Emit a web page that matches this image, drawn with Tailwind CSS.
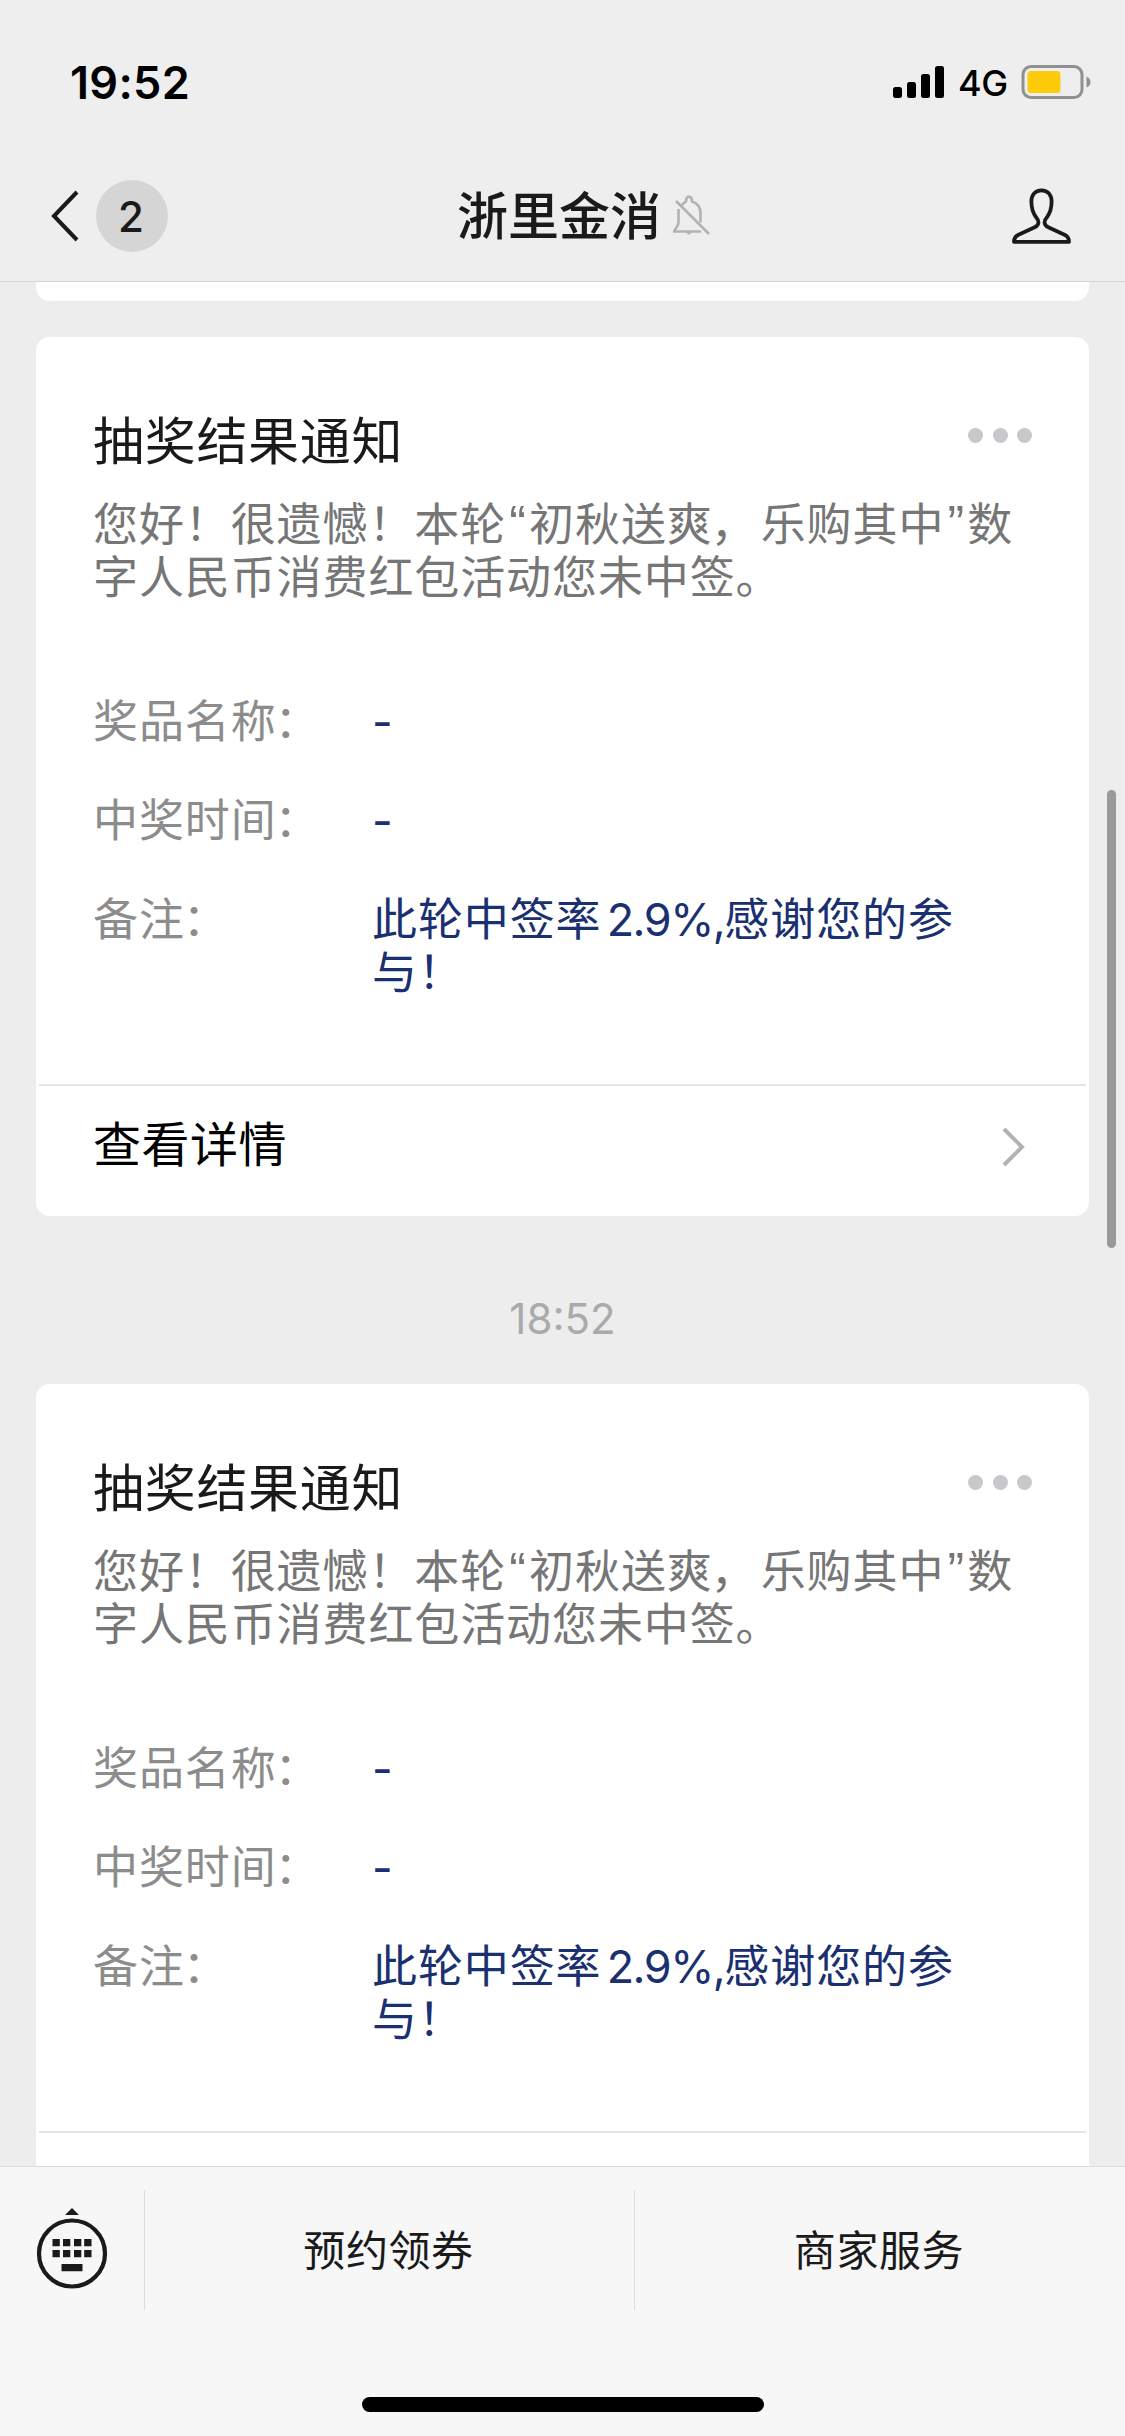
<!DOCTYPE html>
<html lang="zh-CN">
<head>
<meta charset="utf-8">
<title>浙里金消</title>
<script src="https://cdn.jsdelivr.net/npm/@tailwindcss/browser@4"></script>
</head>
<body class="relative flex h-[2436px] w-[1125px] flex-col overflow-hidden bg-[#ededed] font-['Inter','Noto_Sans_CJK_SC',sans-serif] text-[#1a1a1a]">

<header class="flex h-[282px] shrink-0 flex-col border-b border-[#d5d5d5] bg-[#eeeeef]">
  <div class="flex h-[164px] items-center justify-between pl-[70px] pr-[34px]">
    <span class="text-[45px] leading-[45px] font-semibold tracking-[0.3px] text-black">19:52</span>
    <div class="flex items-center">
      <svg class="h-8 w-[51px]" viewBox="0 0 51 32"><rect x="0" y="21" width="9" height="11" rx="2.5"/><rect x="14" y="16" width="9" height="16" rx="2.5"/><rect x="28" y="8" width="9" height="24" rx="2.5"/><rect x="42" y="0" width="9" height="32" rx="2.5"/></svg>
      <span class="ml-[14px] w-[63px] pt-[2px] text-[36px] leading-9 font-medium tracking-[-0.5px] text-black">4G</span>
      <svg class="h-[34px] w-[70px]" viewBox="0 0 70 34"><rect x="2" y="1.500" width="59" height="31" rx="8" fill="none" stroke="#909090" stroke-width="3"/><rect x="6.500" y="6" width="33" height="22" rx="3.5" fill="#fecb0a"/><path d="M65.500 11.5q4 1.500 4 5.500t-4 5.500z" fill="#909090"/></svg>
    </div>
  </div>
  <div class="grid h-[104px] grid-cols-[457px_1fr_113px] items-center">
    <div class="flex items-center pl-[50px]">
      <svg class="h-[52px] w-[30px]" viewBox="0 0 30 52" fill="none" stroke="#1a1a1a" stroke-width="4"><path d="M27 2 4 26l23 24"/></svg>
      <span class="ml-4 flex size-[72px] items-center justify-center rounded-full bg-[#d5d5d5] pr-[2px] text-[42px] font-medium">2</span>
    </div>
    <div class="flex items-center">
      <h1 class="pt-[2px] text-[51px] leading-[60px] font-medium">浙里金消</h1>
      <svg class="ml-[12px] -mt-[2px] h-10 w-[38px]" viewBox="0 0 38 40" fill="none" stroke="#b2b2b2" stroke-width="2.600"><path d="M8.500 10.500C11 7.500 12.500 7 13 6.500c0-6.500 6-6.500 6 0 6 2 8.500 7 8.500 11.500v9.500M5.500 14v13c0 4-3.500 7-4.500 9.500h27M3 6l33 33" stroke-linejoin="round"/><path d="M13.500 37.500a2.600 2.600 0 0 0 5 0z" fill="#b2b2b2" stroke="none"/></svg>
    </div>
    <svg class="h-14 w-[60px]" viewBox="0 0 60 56" fill="none" stroke="#1a1a1a" stroke-width="3.800" stroke-linejoin="round"><path d="M29.500 2.300c-6.700 0-10.200 5-10.100 11.500 0 7 1 10.500 4.700 15.500 3.500 4 3 8-1.400 10L6 47c-3 1.500-4 3-4 6.800h55c0-3.800-1-5.300-4-6.800l-16.700-7.700c-4.400-2-4.900-6-1.400-10 3.700-5 4.700-8.500 4.700-15.500 .1-6.500-3.400-11.500-10.100-11.500z"/></svg>
  </div>
</header>

<main class="h-[1884px] shrink-0 overflow-hidden px-9">
  <div class="h-[19px] rounded-b-[14px] bg-white"></div>

  <article class="mt-9 h-[879px] rounded-[14px] bg-white px-[3px]">
    <div class="h-[747px] pt-[75px] pr-[55px] pl-[54px]">
      <div class="flex justify-between">
        <h2 class="text-[51px] leading-[60px] tracking-[0.7px]">抽奖结果通知</h2>
        <div class="mt-[16px] mr-[-1px] flex gap-[9.500px]"><i class="size-[15px] rounded-full bg-[#c8c7cc]"></i><i class="size-[15px] rounded-full bg-[#c8c7cc]"></i><i class="size-[15px] rounded-full bg-[#c8c7cc]"></i></div>
      </div>
      <p class="mt-[26px] whitespace-nowrap text-[45px] leading-[53px] tracking-[0.9px] text-[#767676]">您好！很遗憾！本轮<span class="inline-block w-[23px] text-center font-['Liberation_Sans'] text-[50px] leading-none tracking-normal">“</span>初秋送爽<span class="inline-block w-[48px] -indent-[2px] leading-none tracking-normal">，</span>乐购其中<span class="inline-block w-[23px] text-center font-['Liberation_Sans'] text-[50px] leading-none tracking-normal">”</span>数<br>字人民币消费红包活动您未中签。</p>
      <dl class="mt-[91px] grid grid-cols-[279px_1fr] gap-y-[46px] whitespace-nowrap text-[45px] leading-[53px] tracking-[0.9px]">
        <dt class="text-[#8c8c8c]">奖品名称<span class="-ml-[2px]">：</span></dt><dd class="text-[#1a3070]">-</dd>
        <dt class="text-[#8c8c8c]">中奖时间<span class="-ml-[2px]">：</span></dt><dd class="text-[#1a3070]">-</dd>
        <dt class="text-[#8c8c8c]">备注<span class="-ml-[2px]">：</span></dt><dd class="text-[#1a3070]">此轮中签率<span class="-ml-[6px] tracking-[-1.500px]"> 2.9%,</span>感谢您的参<br>与！</dd>
      </dl>
    </div>
    <div class="flex h-[132px] items-center justify-between border-t-2 border-[#e5e5e5] pr-[60px] pb-[12px] pl-[54px]">
      <span class="text-[48px] leading-[60px] tracking-[0.5px] text-black">查看详情</span>
      <svg class="mt-1 h-10 w-6" viewBox="0 0 24 40" fill="none" stroke="#b2b2b2" stroke-width="4"><path d="M2 2l18 18L2 38"/></svg>
    </div>
  </article>

  <time class="flex h-[168px] items-center justify-center pt-[36px] text-[42px] text-[#aaa]">18:52</time>

  <article class="h-[879px] rounded-[14px] bg-white px-[3px]">
    <div class="h-[747px] pt-[75px] pr-[55px] pl-[54px]">
      <div class="flex justify-between">
        <h2 class="text-[51px] leading-[60px] tracking-[0.7px]">抽奖结果通知</h2>
        <div class="mt-[16px] mr-[-1px] flex gap-[9.500px]"><i class="size-[15px] rounded-full bg-[#c8c7cc]"></i><i class="size-[15px] rounded-full bg-[#c8c7cc]"></i><i class="size-[15px] rounded-full bg-[#c8c7cc]"></i></div>
      </div>
      <p class="mt-[26px] whitespace-nowrap text-[45px] leading-[53px] tracking-[0.9px] text-[#767676]">您好！很遗憾！本轮<span class="inline-block w-[23px] text-center font-['Liberation_Sans'] text-[50px] leading-none tracking-normal">“</span>初秋送爽<span class="inline-block w-[48px] -indent-[2px] leading-none tracking-normal">，</span>乐购其中<span class="inline-block w-[23px] text-center font-['Liberation_Sans'] text-[50px] leading-none tracking-normal">”</span>数<br>字人民币消费红包活动您未中签。</p>
      <dl class="mt-[91px] grid grid-cols-[279px_1fr] gap-y-[46px] whitespace-nowrap text-[45px] leading-[53px] tracking-[0.9px]">
        <dt class="text-[#8c8c8c]">奖品名称<span class="-ml-[2px]">：</span></dt><dd class="text-[#1a3070]">-</dd>
        <dt class="text-[#8c8c8c]">中奖时间<span class="-ml-[2px]">：</span></dt><dd class="text-[#1a3070]">-</dd>
        <dt class="text-[#8c8c8c]">备注<span class="-ml-[2px]">：</span></dt><dd class="text-[#1a3070]">此轮中签率<span class="-ml-[6px] tracking-[-1.500px]"> 2.9%,</span>感谢您的参<br>与！</dd>
      </dl>
    </div>
    <div class="border-t-2 border-[#e5e5e5]"></div>
  </article>
</main>

<footer class="flex h-[270px] shrink-0 flex-col items-center border-t border-[#dcdcdc] bg-[#f7f7f7]">
  <nav class="mt-[23px] grid h-[120px] w-full grid-cols-[144px_490px_491px] text-[42px] tracking-[0.6px]">
    <div class="flex items-center justify-center pb-[3px]">
      <svg class="h-[82px] w-[72px]" viewBox="0 0 72 82" fill="#1a1a1a"><path d="M36 0l7 7H29z"/><circle cx="36" cy="45.500" r="33" fill="none" stroke="#1a1a1a" stroke-width="4.200"/><path d="M16.500 31h7.300v7.300h-7.300zM27 31h7.300v7.300H27zM38 31h7.300v7.300H38zM48.200 31h7.300v7.300h-7.300zM16.500 42h7.300v7.300h-7.300zM27 42h7.300v7.300H27zM38 42h7.300v7.300H38zM48.200 42h7.300v7.300h-7.300zM25.500 56h21v7.200h-21z"/></svg>
    </div>
    <span class="flex items-center justify-center border-l border-[#dcdcdc] pr-[2px]">预约领券</span>
    <span class="flex items-center justify-center border-l border-[#dcdcdc] pr-[2px]">商家服务</span>
  </nav>
  <div class="mt-[87px] h-[15px] w-[402px] rounded-full bg-black"></div>
</footer>

<div class="absolute top-[790px] right-[9px] h-[458px] w-[9px] rounded-full bg-[#999]"></div>
</body>
</html>
